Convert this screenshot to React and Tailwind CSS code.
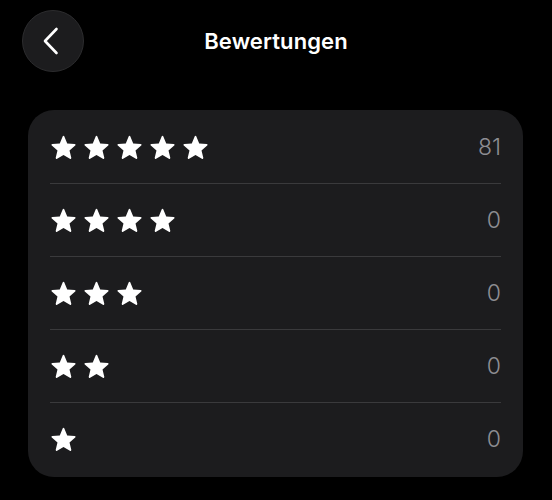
const ratings = [
  { stars: 5, count: 81 },
  { stars: 4, count: 0 },
  { stars: 3, count: 0 },
  { stars: 2, count: 0 },
  { stars: 1, count: 0 },
];

const Star = () => (
  <svg viewBox="0 0 24 24" className="h-[27px] w-[27px] shrink-0" fill="white">
    <path
      d="M12 1.6c.35 0 .62.2.76.55l2.55 6.2 6.63.5c.37.03.64.22.75.55.1.33 0 .66-.27.9l-5.07 4.33 1.57 6.5c.09.37-.03.7-.32.9-.28.2-.62.2-.94 0L12 18.6l-5.66 3.43c-.32.2-.66.2-.94 0-.29-.2-.41-.53-.32-.9l1.57-6.5L1.58 10.3c-.27-.24-.37-.57-.27-.9.11-.33.38-.52.75-.55l6.63-.5 2.55-6.2c.14-.35.41-.55.76-.55z"
    />
  </svg>
);

export default function App() {
  return (
    <div
      className="min-h-[500px] w-[552px] bg-black text-white"
      style={{ fontFamily: 'Inter, "Liberation Sans", sans-serif' }}
    >
      {/* Header */}
      <div className="relative flex h-[72px] justify-center pt-[10px]">
        <button className="absolute left-[22px] top-[10px] flex h-[62px] w-[62px] items-center justify-center rounded-full border border-[#2c2c2e] bg-[#1c1c1e]">
          <svg viewBox="0 0 18 28" className="h-[28px] w-[18px] -translate-x-[2px]" fill="none" stroke="white" strokeWidth="2.6" strokeLinecap="round" strokeLinejoin="round">
            <polyline points="14.5,2 3,14 14.5,26" />
          </svg>
        </button>
        <h1 className="h-[62px] leading-[62px] text-[22px] font-semibold tracking-[0.1px]">Bewertungen</h1>
      </div>

      {/* Ratings card */}
      <div className="mx-[28px] mt-[38px] w-[495px] rounded-[26px] bg-[#1c1c1e] px-[22px] pt-[1px] pb-[2px]">
        {ratings.map(({ stars, count }, i) => (
          <div
            key={stars}
            className={`flex items-center justify-between ${i < ratings.length - 1 ? 'h-[73px] border-b border-[#3a3a3c]' : 'h-[72px]'}`}
          >
            <div className="flex items-center gap-[6px]">
              {Array.from({ length: stars }).map((_, j) => (
                <Star key={j} />
              ))}
            </div>
            <span className="text-[23px] font-light text-[#8e8e93]">{count}</span>
          </div>
        ))}
      </div>
    </div>
  );
}
